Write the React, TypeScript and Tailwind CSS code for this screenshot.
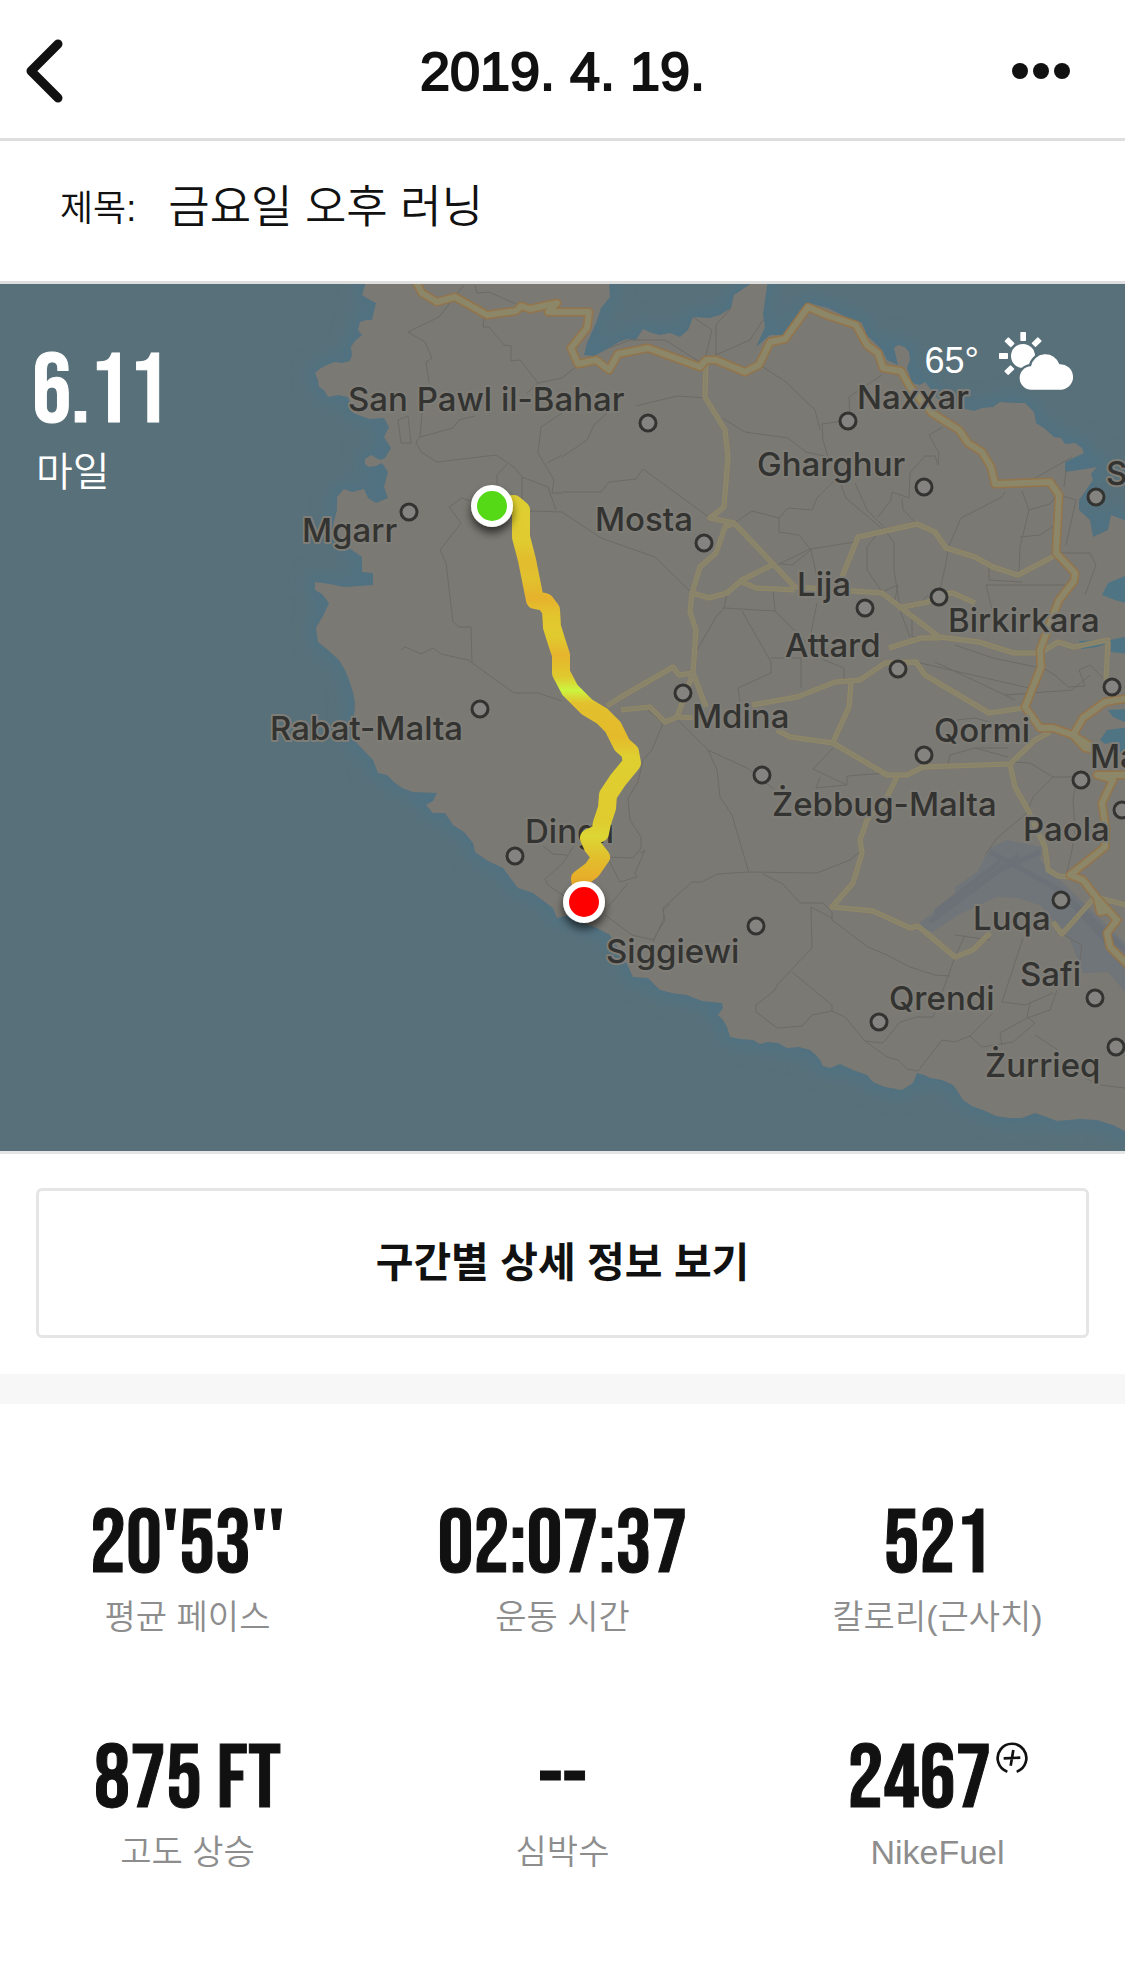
interface Stat {
  label: string
  value: string
  fuel?: boolean
}

interface Town {
  name?: string
  x: number
  y: number
  dot: [number, number]
}

const stats: Stat[] = [
  { value: "20'53''", label: "평균 페이스" },
  { value: "02:07:37", label: "운동 시간" },
  { value: "521", label: "칼로리(근사치)" },
  { value: "875 FT", label: "고도 상승" },
  { value: "--", label: "심박수" },
  { value: "2467", label: "NikeFuel", fuel: true },
]

const towns: Town[] = [
  { name: "San Pawl il-Bahar", x: 348, y: 411, dot: [648, 423] },
  { name: "Naxxar", x: 857, y: 409, dot: [848, 421] },
  { name: "Gharghur", x: 757, y: 476, dot: [924, 487] },
  { name: "S", x: 1106, y: 485, dot: [1096, 497] },
  { name: "Mgarr", x: 302, y: 542, dot: [409, 512] },
  { name: "Mosta", x: 595, y: 531, dot: [704, 543] },
  { name: "Lija", x: 797, y: 596, dot: [865, 608] },
  { name: "Birkirkara", x: 948, y: 632, dot: [939, 597] },
  { name: "Attard", x: 785, y: 657, dot: [898, 669] },
  { name: "Mdina", x: 692, y: 728, dot: [683, 693] },
  { name: "Rabat-Malta", x: 270, y: 740, dot: [480, 709] },
  { name: "Dingli", x: 525, y: 843, dot: [515, 856] },
  { name: "Siggiewi", x: 606, y: 963, dot: [756, 926] },
  { name: "Qormi", x: 934, y: 742, dot: [924, 755] },
  { name: "Żebbug-Malta", x: 772, y: 816, dot: [762, 775] },
  { name: "Ma", x: 1090, y: 768, dot: [1081, 780] },
  { x: 0, y: 0, dot: [1112, 687] },
  { name: "Paola", x: 1023, y: 841, dot: [1122, 810] },
  { name: "Luqa", x: 973, y: 930, dot: [1061, 900] },
  { name: "Safi", x: 1020, y: 986, dot: [1095, 998] },
  { name: "Qrendi", x: 889, y: 1010, dot: [879, 1022] },
  { name: "Żurrieq", x: 985, y: 1077, dot: [1116, 1047] },
]

const land =
  "M365 280V285L362 295 370 300 376 303 372 320 366 320 360 322 358 330 362 335 355 341 351 347 352 355 350 361 342 363 335 362 327 365 321 368 315 373 318 380 319 387 324 390 328 397 338 395 348 397 353 413 369 419 384 418 389 427 384 437 391 448 385 458 380 460 371 455 365 459 365 464 369 467 376 466 382 463 388 472 384 487 388 498 376 503 368 498 364 489 352 492 344 489 337 497 337 510 333 525 349 548 362 557 362 572 373 573 373 585 360 586 344 587 330 584 315 582 315 590 322 594 329 603 324 614 316 628 318 642 328 650 339 660 345 670 349 680 353 692 355 703 354 720 352 738 373 760 378 773 387 775 394 782 402 788 413 792 437 793 433 801 426 805 433 813 445 813 453 825 464 832 473 843 475 852 488 861 503 868 518 888 533 893 553 908 557 918 570 915 580 922 597 928 610 935 618 948 626 962 633 977 648 978 660 990 672 993 687 995 702 1001 722 1003 723 1008 718 1015 723 1020 727 1027 730 1037 740 1039 753 1040 760 1044 768 1042 778 1043 787 1048 799 1047 810 1050 816 1055 820 1060 823 1066 830 1068 840 1064 853 1070 867 1075 873 1082 885 1087 902 1090 913 1083 917 1073 924 1075 930 1078 942 1080 953 1085 958 1092 963 1100 972 1106 983 1110 996 1116 1010 1118 1022 1118 1035 1113 1044 1116 1057 1121 1080 1119 1097 1120 1113 1125 1130 1134V522L1111 515 1108 530 1093 537 1090 520 1079 510 1079 500 1093 480 1091 474 1097 467 1079 470 1065 472 1065 462 1084 453 1082 448 1075 443 1065 444 1061 438 1054 437 1044 428 1036 423 1034 412 1025 403 1014 403 1000 402 993 407 982 408 974 411 961 408 950 406 939 400 925 382 920 385 912 383 907 368 910 360 909 352 905 347 898 345 894 348 898 365 887 360 882 350 867 335 862 323 846 317 828 308 808 303 799 315 785 335 770 335 756 347 765 327 763 315 765 300 768 280H755L749 285 734 295 731 308 720 315 709 318 693 317 688 330 680 337 670 333 660 335 652 333 643 329 636 340 627 339 619 342 609 348 594 356 584 355 587 343 596 323 601 308 610 297 609 280Z"

const bays =
  "M1130 574L1108 583 1102 595 1115 600 1130 604ZM1130 636L1110 640 1079 641 1082 649 1097 647 1111 642 1111 652 1130 654ZM1130 709L1108 710 1113 717 1130 724ZM1130 727L1107 730 1100 740 1105 744 1113 742 1118 752 1130 757Z"

const airport =
  "M917 925L955 895V887L977 872 990 848 1007 840 1042 847 1040 860 1060 880 1125 943 1130 998 1108 972 1083 973 1070 940 1040 905 1017 898 997 897 960 914 933 932Z"

const highways = [
  "M415 280L422 293 437 302 455 297 487 315 516 311 521 306 530 309 557 303 548 312 589 312 587 328 571 348 578 364 596 360 609 370 618 354 648 348 700 367 706 360 716 360 745 372 759 365 770 342 785 339 808 307 826 315 856 325 867 345 878 353 883 368 901 371 910 387 932 413 959 430 968 443 982 452 991 467 995 484 1050 482 1059 495 1056 553 1075 573 1074 581 1059 600 1040 650 1041 667 1025 707 1040 728 1053 728 1073 735 1097 750 1085 748 1073 735 1083 718 1105 702 1130 698",
  "M1130 775L1097 775 1113 780 1102 803 1106 830 1105 847 1070 875 1083 880 1097 898 1117 920 1107 933 1110 947 1130 967",
  "M1097 898L1100 912 1108 910",
]

const roads = [
  "M706 360L705 397 725 430 728 457 724 507 710 518 734 523 795 587 882 593 939 637 979 642 1014 653 1040 653 1058 642 1074 647 1108 640 1106 680",
  "M734 523L725 527 716 553 700 567 692 593 690 612 696 630 693 673 706 707",
  "M692 593L709 598 727 593 742 580 772 565",
  "M742 582L756 588 795 590",
  "M842 577L858 537 917 524 935 532 946 548 975 557 993 567 1018 575 1056 555",
  "M898 608L928 602 940 594 953 593 975 603",
  "M889 648L921 638 939 638",
  "M752 705L797 697 835 682 860 680 885 663 916 662 925 675 989 713 1023 708",
  "M851 682L849 707 833 742",
  "M777 730L790 737 833 743 887 775 907 775 923 767 1010 764 1035 740 1050 732",
  "M897 777L888 795 867 820 860 840 862 853 853 883 832 907 873 911 910 928 918 926 955 957 973 950 990 933",
  "M1010 764L1015 787 1028 810 1045 847 1048 870 1058 876 1070 877",
  "M1053 922L1062 934 1095 897 1130 906",
  "M607 706L621 697 673 667 679 675 693 673 677 717 665 722 650 707 621 710",
  "M677 717L698 718",
]

const lanes =
  "M464 285L439 317 408 332 425 342 432 358 426 362 429 383M475 285L477 293 489 292 516 304M484 317L483 327 489 327 504 345 511 346 511 361 520 360 538 383 527 393M538 383L562 378 577 366M398 420L408 416 411 443 401 443ZM422 413L420 437 453 428 459 420 475 416M420 437L416 442 421 452 437 462 496 455 514 467 522 477 548 487 556 510M562 413L541 427 538 453 554 480 552 493 562 493M547 463L562 455M522 477V500M507 464L497 475V497M530 511L562 512 601 538 655 557 692 593M480 505L462 498 449 507 461 523 440 550 446 563 453 622 459 627 471 627 472 662M401 650L405 647 412 650 421 654 433 648 441 654 468 660 514 693 538 693 562 701" +
  "M609 348L630 340 665 340 700 362M636 406L677 396 705 398M562 457L587 440 594 425 607 413M562 492L601 492 609 482 636 479 643 469 710 518M763 367L786 382 815 410 820 430M722 418L745 432 788 438 806 452 828 457M882 375L849 397 850 420 822 424 823 440 828 457M734 523L752 511 779 518 779 532 799 535 811 550 817 577M779 518L788 508 812 510 817 498 838 477 846 498 887 533 894 543 894 570 901 613 910 637M855 483L867 510 887 530M777 565L810 549 855 542M780 564L792 565 811 550M880 530L867 547 867 570 882 592 898 585M943 427L929 435 939 453 938 465 935 456 925 456 910 473 909 498 892 492 891 500 878 517M902 498L903 510 917 524M1005 492L1002 497 961 518 948 548 946 563 940 590M1022 491L1029 510 1020 547 1019 575M1029 510L1050 504 1059 492M1020 537L1040 535 1055 525M1072 457L1032 480M1066 470L1064 487M1059 495L1076 500 1066 545M1056 553L1090 553 1096 565 1085 595M989 567V580L1022 582M1065 585H986L993 613M724 608L775 611 773 590M727 593L724 608 716 617 697 650M742 611L771 662 771 673 738 688 740 703M775 611L824 660 844 668V680M801 658V688M771 658H801M817 603L811 633M693 317L712 330 706 355M731 308L716 325 716 355 750 340 763 320M955 645L993 658 1036 667M916 662L1029 688M935 662L1005 695 1015 700M1005 695L1072 690 1090 675M1041 667L1055 675 1068 687 1085 686 1079 670 1090 665 1105 680M912 612V637L960 640M898 585L895 600 882 592M915 608L928 595" +
  "M675 717L708 750 747 768 775 790M708 750L717 770 720 797 732 815 749 873M653 942L664 918 663 908 692 882 702 882 717 874 749 872 817 873 850 860 860 852M763 874L783 884 800 903 823 903 832 912 832 920 868 947 887 955 910 967 935 975 950 976M811 907L832 918M811 907L812 948 777 985 775 990 756 1005V1012L777 1028 802 1026 812 1015 832 1011 845 1017 865 1041 887 1057 898 1060 907 1069 918 1071 942 1040 955 1042 970 1036 993 1013M792 972L832 1005V1011M865 1041L883 1043 900 1022 917 1017 933 1017 955 957 965 935M1023 938L1002 1002 1025 1005 1053 993M970 1036L982 1047 1013 1042 1035 1023 1027 1017 1030 1003M1035 1035L1058 1050M1085 1078L1100 1085 1125 1088M1002 1045L1000 1033 1027 1018 1050 1010 1057 990M955 935L990 940M1062 934L1082 945 1080 960M833 748L813 769 847 785 847 776 887 773M820 777L816 788 847 785M948 765L950 755 975 748 1008 757M975 748L1008 748M1010 762L1030 763 1053 777 1077 777 1073 800 1075 830 1072 850 1067 872M1053 777L1033 797 1027 813 997 838 985 855M957 720L975 718 1000 725" +
  "M663 723L652 750 643 760 638 782 628 798 630 820 641 837 641 848 633 858 607 857 620 882 637 877 635 873 645 850 640 853M628 883L608 907M573 847L563 863 545 879 548 885 567 898M543 846L553 854 567 855M605 915L632 935 653 940 665 920 663 910 670 904M648 710L663 723"

const runways = "M930 922L1018 856M935 912L1000 862M990 852L1060 890 1125 962M1000 870L1040 852M1065 895L1125 950"

const route =
  "M492 506L514 504 521 510 521 537 527 560 531 580 535 600 545 602 551 610 552 627 557 643 561 655 561 673 570 690 587 707 602 716 613 727 622 745 630 752 632 763 618 780 608 795 607 808 602 823 600 833 589 838 593 847 601 857 592 870 580 879 584 903"

function RouteMap() {
  return (
    <svg viewBox="0 284 1125 867" className="block h-auto w-full" role="img" aria-label="Malta">
      <defs>
        <linearGradient id="pace" gradientUnits="userSpaceOnUse" x1="0" y1="504" x2="0" y2="880">
          <stop offset="0" stopColor="#dfce31" />
          <stop offset="0.1" stopColor="#e0cb30" />
          <stop offset="0.15" stopColor="#e2bc2e" />
          <stop offset="0.2" stopColor="#e1c12e" />
          <stop offset="0.25" stopColor="#e6b22c" />
          <stop offset="0.3" stopColor="#e2c62e" />
          <stop offset="0.35" stopColor="#e0cb2f" />
          <stop offset="0.4" stopColor="#e6b52c" />
          <stop offset="0.46" stopColor="#dfc92f" />
          <stop offset="0.495" stopColor="#ccf53f" />
          <stop offset="0.53" stopColor="#e2c02e" />
          <stop offset="0.62" stopColor="#e4ba2b" />
          <stop offset="0.67" stopColor="#dfcf30" />
          <stop offset="0.84" stopColor="#e0cb2f" />
          <stop offset="0.885" stopColor="#dcd634" />
          <stop offset="0.94" stopColor="#e2bf2d" />
          <stop offset="1" stopColor="#e8ac29" />
        </linearGradient>
        <filter id="shore" x="-10%" y="-10%" width="120%" height="120%">
          <feGaussianBlur stdDeviation="9" />
        </filter>
        <filter id="drop" x="-50%" y="-50%" width="200%" height="200%">
          <feDropShadow dx="0" dy="6" stdDeviation="4" floodColor="#000" floodOpacity="0.6" />
        </filter>
      </defs>

      <rect y="280" width="1125" height="880" fill="#587079" />
      <path d={land} fill="none" stroke="#507283" strokeWidth="16" filter="url(#shore)" />
      <path d={land} fill="#7b7973" />
      <path d={bays} fill="#4f7484" />
      <path d={airport} fill="#70757a" />
      <path d={runways} fill="none" stroke="#6b7177" strokeWidth="5" />
      <path d={lanes} fill="none" stroke="#6c6b67" strokeWidth="1" strokeLinejoin="round" />

      <g fill="none" strokeLinejoin="round">
        {roads.map((d) => (
          <path key={d} d={d} stroke="#928765" strokeWidth="5" />
        ))}
        {roads.map((d) => (
          <path key={d} d={d} stroke="#88846c" strokeWidth="3" />
        ))}
        {highways.map((d) => (
          <path key={d} d={d} stroke="#93744b" strokeWidth="9" />
        ))}
        {highways.map((d) => (
          <path key={d} d={d} stroke="#8c8769" strokeWidth="6" />
        ))}
      </g>

      {towns.map(({ name, x, y, dot }) => (
        <g key={`${dot[0]}-${dot[1]}`}>
          <circle cx={dot[0]} cy={dot[1]} r="8" fill="#85837f" stroke="#333331" strokeWidth="3" />
          {name && (
            <text
              x={x}
              y={y}
              className="font-['Inter',sans-serif] text-[33px] font-medium"
              fill="#333331"
              stroke="#7f7d77"
              strokeWidth="4"
              strokeLinejoin="round"
              paintOrder="stroke"
            >
              {name}
            </text>
          )}
        </g>
      ))}

      <path d={route} fill="none" stroke="url(#pace)" strokeWidth="18" strokeLinejoin="round" />
      <g strokeWidth="6" stroke="#fff" filter="url(#drop)">
        <circle cx="492" cy="506" r="18" fill="#54d816" />
        <circle cx="584" cy="902" r="18" fill="#fe0000" />
      </g>
    </svg>
  )
}

function WeatherIcon() {
  return (
    <svg width="76" height="58" viewBox="0 0 228 174" aria-hidden="true">
      <g fill="#fff">
        <circle cx="72" cy="72" r="36" />
        <rect x="64" y="0" width="17" height="27" rx="2" />
        <rect x="0" y="63" width="27" height="18" rx="2" />
        <rect x="18" y="22" width="27" height="17" rx="2" transform="rotate(45 31 31)" />
        <rect x="100" y="22" width="27" height="17" rx="2" transform="rotate(-45 113 31)" />
        <rect x="18" y="106" width="27" height="17" rx="2" transform="rotate(-45 31 115)" />
      </g>
      <path
        d="M98 173a35 35 0 0 1-2-70 44 44 0 0 1 85-6 38 38 0 1 1 6 76Z"
        fill="#fff"
        stroke="#587079"
        strokeWidth="14"
        paintOrder="stroke"
      />
    </svg>
  )
}

function FuelIcon() {
  return (
    <svg
      width="32"
      height="32"
      viewBox="0 0 96 96"
      fill="none"
      stroke="#111"
      strokeWidth="8"
      className="mt-3 ml-1"
      aria-hidden="true"
    >
      <path d="M34 89A43 43 0 1 1 62 89" />
      <path d="M52 24L44 71M23 49L73 47" />
    </svg>
  )
}

export default function App() {
  return (
    <main className="min-h-screen w-full bg-white font-['Liberation_Sans','Noto_Sans_CJK_KR',sans-serif] text-[#111]">
      <header className="grid grid-cols-[1fr_auto_1fr] items-center border-b-3 border-[#dedede] px-6 pt-[38px] pb-[34px]">
        <button type="button" aria-label="Back" className="justify-self-start">
          <svg width="42" height="66" viewBox="0 0 42 66" fill="none" stroke="#111" strokeWidth="9" strokeLinecap="round">
            <path d="M34 6L7 33L34 60" strokeLinejoin="round" />
          </svg>
        </button>
        <h1 className="text-[54px] leading-[65px] font-normal [-webkit-text-stroke:2px_#111]">2019. 4. 19.</h1>
        <button type="button" aria-label="More" className="mr-[30px] justify-self-end">
          <svg width="60" height="20" viewBox="0 0 60 20" fill="#111">
            <circle cx="9" cy="10" r="8" />
            <circle cx="30" cy="10" r="8" />
            <circle cx="51" cy="10" r="8" />
          </svg>
        </button>
      </header>

      <div className="flex items-center gap-8 border-b-3 border-[#dedede] px-15 pt-7 pb-9 font-[350]">
        <label htmlFor="title" className="pt-1 text-[36px] leading-[64px]">
          제목:
        </label>
        <input
          id="title"
          type="text"
          defaultValue="금요일 오후 러닝"
          className="h-[76px] min-w-0 flex-1 bg-transparent pb-2 text-[45px] outline-none"
        />
      </div>

      <section className="relative border-b-3 border-[#e5e5e5]">
        <RouteMap />
        <div className="absolute top-14 left-8 text-white">
          <p className="font-['Bebas_Neue','Oswald','Roboto_Condensed','Liberation_Sans_Narrow',sans-serif] text-[98px] leading-[106px] [-webkit-text-stroke:1px_#fff]">
            6.11
          </p>
          <p className="px-1 text-[40px] leading-[52px] font-[350]">마일</p>
        </div>
        <div className="absolute top-12 right-[50px] flex items-center gap-5 text-white">
          <span className="text-[36px]">65°</span>
          <WeatherIcon />
        </div>
      </section>

      <div className="px-9 pt-[34px] pb-9">
        <button
          type="button"
          className="w-full rounded-md border-3 border-[#e5e5e5] py-10 text-[41px] leading-[64px] font-bold"
        >
          구간별 상세 정보 보기
        </button>
      </div>

      <div className="h-[30px] bg-[#f7f7f7]" />

      <dl className="grid grid-cols-3 gap-y-[91px] pt-[91px] pb-20 text-center">
        {stats.map(({ value, label, fuel }) => (
          <div key={label} className="flex flex-col-reverse items-center">
            <dt className="text-[34px] leading-[44px] font-[350] text-[#8d8d8d]">{label}</dt>
            <dd className="flex items-start font-['Bebas_Neue','Oswald','Roboto_Condensed','Liberation_Sans_Narrow',sans-serif] text-[90px] leading-[100px] [-webkit-text-stroke:1px_#111]">
              {value}
              {fuel && <FuelIcon />}
            </dd>
          </div>
        ))}
      </dl>
    </main>
  )
}
